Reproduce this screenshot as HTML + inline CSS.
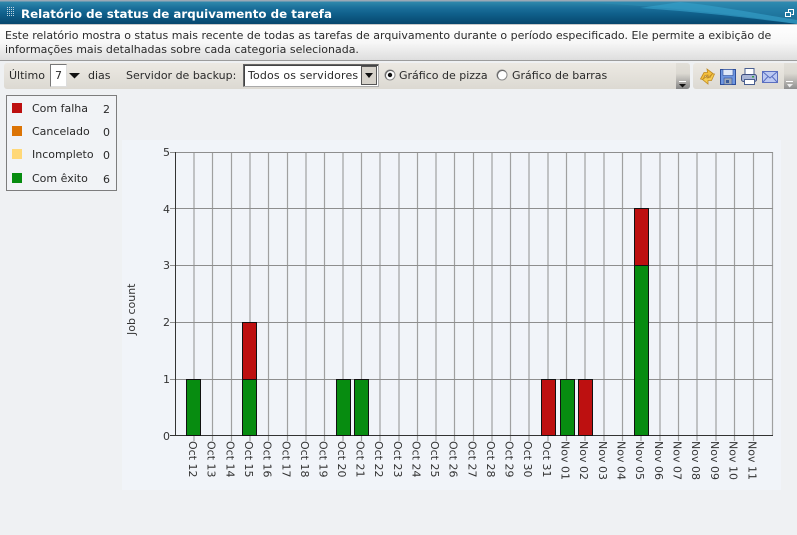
<!DOCTYPE html>
<html><head><meta charset="utf-8">
<style>
html,body{margin:0;padding:0;width:797px;height:535px;overflow:hidden;background:#eff1f3;font-family:"DejaVu Sans",Verdana,sans-serif;color:#2a2a2a}
.a{position:absolute;white-space:nowrap}
#title{left:0;top:0;width:797px;height:24px;background:linear-gradient(#9aa9b6 0,#9aa9b6 1px,#2f88ab 2px,#1a6f9a 8px,#0f5f8a 14px,#07476e 24px);overflow:hidden}
#desc{left:0;top:24px;width:797px;height:37px;background:linear-gradient(#fff 0,#f7f7f7 50%,#dedede 100%);border-top:1px solid #c9c9c9;border-bottom:1px solid #9c9c9c;box-sizing:border-box}
.t{font-size:11px;line-height:13px}
.tb{background:linear-gradient(#ece9e3,#dcd9d2);border-radius:3px}
</style></head><body>
<div id="title" class="a">
<svg class="a" style="left:0;top:0" width="797" height="24">
<path d="M560 2 C640 4 720 12 797 24 L797 2Z" fill="#2f8fb5" opacity=".5"/>
<path d="M680 2 C720 6 770 16 797 20 L797 24 C750 18 700 12 640 8Z" fill="#35a0ca" opacity=".65"/>
<g fill="#bcd3e0"><rect x="7" y="7" width="1" height="1"/><rect x="9" y="7" width="1" height="1"/><rect x="11" y="7" width="1" height="1"/><rect x="13" y="7" width="1" height="1"/><rect x="7" y="9" width="1" height="1"/><rect x="9" y="9" width="1" height="1"/><rect x="11" y="9" width="1" height="1"/><rect x="13" y="9" width="1" height="1"/><rect x="7" y="11" width="1" height="1"/><rect x="9" y="11" width="1" height="1"/><rect x="11" y="11" width="1" height="1"/><rect x="13" y="11" width="1" height="1"/><rect x="7" y="13" width="1" height="1"/><rect x="9" y="13" width="1" height="1"/><rect x="11" y="13" width="1" height="1"/><rect x="13" y="13" width="1" height="1"/><rect x="7" y="15" width="1" height="1"/><rect x="9" y="15" width="1" height="1"/><rect x="11" y="15" width="1" height="1"/><rect x="13" y="15" width="1" height="1"/></g>
<path d="M788.500 12.500V9.500h5v5h-2" fill="none" stroke="#fff"/><rect x="785.500" y="12.500" width="5" height="4" fill="none" stroke="#fff"/>
</svg>
<div class="a" style="left:21px;top:6px;font-size:11.85px;font-weight:bold;color:#fff;line-height:16px">Relatório de status de arquivamento de tarefa</div>
</div>
<div id="desc" class="a">
<div class="a t" style="left:5px;top:4px">Este relatório mostra o status mais recente de todas as tarefas de arquivamento durante o período especificado. Ele permite a exibição de</div>
<div class="a t" style="left:5px;top:18px">informações mais detalhadas sobre cada categoria selecionada.</div>
</div>

<div class="a tb" style="left:4px;top:63px;width:686px;height:26px"></div>
<div class="a" style="left:676px;top:63px;width:14px;height:26px;background:linear-gradient(#e2dfd8 0,#dcd9d2 40%,#858585 100%);border-radius:0 3px 3px 0"></div>
<svg class="a" style="left:679px;top:80px" width="8" height="8"><rect x="0" y="1" width="7" height="1" fill="#fff"/><path d="M0 4h7L3.500 7.500Z" fill="#111"/></svg>

<div class="a t" style="left:9px;top:69px">Último</div>
<div class="a" style="left:50px;top:64px;width:17px;height:23px;background:#fff;border:1px solid #777;border-right-color:#ddd;border-bottom-color:#ddd;box-sizing:border-box"></div>
<div class="a t" style="left:55px;top:69px">7</div>
<svg class="a" style="left:69px;top:72px" width="11" height="7"><path d="M0 1h11L5.500 6.500Z" fill="#111"/></svg>
<div class="a t" style="left:88px;top:69px">dias</div>
<div class="a t" style="left:126px;top:69px">Servidor de backup:</div>
<div class="a" style="left:243px;top:64px;width:136px;height:23px;background:#fff;border:1px solid #666;border-right-color:#aaa;border-bottom-color:#aaa;box-shadow:inset 1px 1px 0 #444;box-sizing:border-box"></div>
<div class="a t" style="left:248px;top:69px;letter-spacing:.14px">Todos os servidores</div>
<div class="a" style="left:361px;top:66px;width:16px;height:19px;background:#d6d2ca;border:1px solid #555;box-sizing:border-box"></div>
<svg class="a" style="left:365px;top:73px" width="9" height="6"><path d="M0 0h8L4 5Z" fill="#111"/></svg>

<svg class="a" style="left:383px;top:67px" width="16" height="16"><circle cx="7" cy="8" r="5" fill="#fff" stroke="#8a8a8a"/><path d="M3.500 11.500A5 5 0 0 1 10.500 4.500" fill="none" stroke="#666"/><circle cx="7" cy="8" r="2.200" fill="#111"/></svg>
<div class="a t" style="left:399px;top:69px">Gráfico de pizza</div>
<svg class="a" style="left:495px;top:67px" width="16" height="16"><circle cx="7" cy="8" r="5" fill="#fff" stroke="#8a8a8a"/><path d="M3.500 11.500A5 5 0 0 1 10.500 4.500" fill="none" stroke="#666"/></svg>
<div class="a t" style="left:512px;top:69px">Gráfico de barras</div>

<div class="a tb" style="left:693px;top:63px;width:104px;height:26px"></div>
<div class="a" style="left:784px;top:63px;width:13px;height:26px;background:linear-gradient(#e2dfd8 0,#dcd9d2 40%,#8f8f8f 100%)"></div>
<svg class="a" style="left:786px;top:80px" width="8" height="8"><rect x="0" y="1" width="7" height="1" fill="#fff"/><path d="M1 4h6L3.500 7.500Z" fill="#eee"/></svg>

<svg class="a" style="left:697px;top:66px" width="90" height="20">
<path d="M3.500 13 L7 6.500 L10.500 6.500 L10 3 L16 7.500 L11 11.500 L11 9 L8 9.500 L6 13.500Z" fill="#f4bf3c" stroke="#c08a20" stroke-width=".8"/>
<path d="M17.500 8 L14.500 14.500 L11 14.500 L11 18 L5.500 13.500 L10 10 L10 12 L13 11.500 L15 8Z" fill="#f6cc50" stroke="#c08a20" stroke-width=".8"/>
<rect x="23.500" y="3.500" width="15" height="15" fill="#6f97e0" stroke="#2f4f9a"/>
<rect x="26" y="3.500" width="10" height="6" fill="#dfe8f8" stroke="#2f4f9a" stroke-width=".6"/>
<rect x="27" y="12" width="8" height="6.500" fill="#9aa7b8" stroke="#2f4f9a" stroke-width=".6"/><rect x="29" y="14" width="3" height="3" fill="#3a5a9a"/>
<rect x="48" y="2.500" width="9" height="6" fill="#fff" stroke="#4a5f90"/>
<rect x="44.500" y="8.500" width="15" height="7" rx="2" fill="#aab6d6" stroke="#3f4f80"/>
<rect x="47.500" y="13.500" width="10" height="5" fill="#fff" stroke="#4a5f90"/>
<rect x="55" y="10" width="2" height="1.500" fill="#3aa04a"/>
<rect x="65.500" y="5.500" width="15" height="11" fill="#bcc9f2" stroke="#5a6fc0"/>
<path d="M65.500 5.500 L73 12 L80.500 5.500 M65.500 16.500 L71 10.500 M80.500 16.500 L75 10.500" fill="none" stroke="#5a6fc0"/>
</svg>

<div class="a" style="left:6px;top:95px;width:111px;height:96px;background:#f1f3f6;border:1px solid #7d7d7d;box-sizing:border-box"></div>
<svg class="a" style="left:12px;top:103px" width="11" height="82"><rect y="0" width="10" height="10" fill="#bd1010"/><rect y="23" width="10" height="10" fill="#dc7405"/><rect y="46" width="10" height="10" fill="#ffd878"/><rect y="70" width="10" height="10" fill="#078c10"/></svg>
<div class="a t" style="left:32px;top:102px">Com falha</div><div class="a t" style="left:103px;top:103px">2</div>
<div class="a t" style="left:32px;top:125px">Cancelado</div><div class="a t" style="left:103px;top:126px">0</div>
<div class="a t" style="left:32px;top:148px">Incompleto</div><div class="a t" style="left:103px;top:149px">0</div>
<div class="a t" style="left:32px;top:172px">Com êxito</div><div class="a t" style="left:103px;top:173px">6</div>

<svg class="a" style="left:0;top:0" width="797" height="535" font-family="DejaVu Sans, Verdana, sans-serif" font-size="11" fill="#333">
<rect x="122" y="140" width="659" height="350" fill="#f1f4f9"/>
<g stroke="#a0a0a0" stroke-width="1.2">
<path d="M194 152V441M212.500 152V441M231.500 152V441M250 152V441M268.500 152V441M287.500 152V441M306 152V441M324.500 152V441M343 152V441M361.500 152V441M380 152V441M399 152V441M417.500 152V441M436 152V441M454.500 152V441M473.500 152V441M492 152V441M510.500 152V441M529 152V441M548 152V441M566.500 152V441M585 152V441M604 152V441M622.500 152V441M641 152V441M660 152V441M678.500 152V441M697 152V441M716 152V441M734.500 152V441M753.500 152V441M772.500 152V435"/>
</g>
<g stroke="#8e8e8e"><path d="M170 152.500H773M170 208.500H773M170 265.500H773M170 322.500H773M170 379.500H773"/></g>
<path d="M175.500 152V435.500H773M170 435.500H176" fill="none" stroke="#333"/>
<g stroke="#111" stroke-width="1">
<rect x="186.500" y="379.500" width="14" height="56" fill="#078c10"/>
<rect x="242.500" y="379.500" width="14" height="56" fill="#078c10"/>
<rect x="242.500" y="322.500" width="14" height="57" fill="#bd1010"/>
<rect x="336.500" y="379.500" width="14" height="56" fill="#078c10"/>
<rect x="354.500" y="379.500" width="14" height="56" fill="#078c10"/>
<rect x="541.500" y="379.500" width="14" height="56" fill="#bd1010"/>
<rect x="560.500" y="379.500" width="14" height="56" fill="#078c10"/>
<rect x="578.500" y="379.500" width="14" height="56" fill="#bd1010"/>
<rect x="634.500" y="265.500" width="14" height="170" fill="#078c10"/>
<rect x="634.500" y="208.500" width="14" height="57" fill="#bd1010"/>
</g>
<g text-anchor="end"><text x="170" y="156">5</text><text x="170" y="213">4</text><text x="170" y="269">3</text><text x="170" y="326">2</text><text x="170" y="383">1</text><text x="170" y="440">0</text></g>
<text transform="translate(135,335) rotate(-90)">Job count</text>
<g>
<text transform="translate(189,441) rotate(90)">Oct 12</text>
<text transform="translate(207.500,441) rotate(90)">Oct 13</text>
<text transform="translate(226.500,441) rotate(90)">Oct 14</text>
<text transform="translate(245,441) rotate(90)">Oct 15</text>
<text transform="translate(263.500,441) rotate(90)">Oct 16</text>
<text transform="translate(282.500,441) rotate(90)">Oct 17</text>
<text transform="translate(301,441) rotate(90)">Oct 18</text>
<text transform="translate(319.500,441) rotate(90)">Oct 19</text>
<text transform="translate(338,441) rotate(90)">Oct 20</text>
<text transform="translate(356.500,441) rotate(90)">Oct 21</text>
<text transform="translate(375,441) rotate(90)">Oct 22</text>
<text transform="translate(394,441) rotate(90)">Oct 23</text>
<text transform="translate(412.500,441) rotate(90)">Oct 24</text>
<text transform="translate(431,441) rotate(90)">Oct 25</text>
<text transform="translate(449.500,441) rotate(90)">Oct 26</text>
<text transform="translate(468.500,441) rotate(90)">Oct 27</text>
<text transform="translate(487,441) rotate(90)">Oct 28</text>
<text transform="translate(505.500,441) rotate(90)">Oct 29</text>
<text transform="translate(524,441) rotate(90)">Oct 30</text>
<text transform="translate(543,441) rotate(90)">Oct 31</text>
<text transform="translate(561.500,441) rotate(90)">Nov 01</text>
<text transform="translate(580,441) rotate(90)">Nov 02</text>
<text transform="translate(599,441) rotate(90)">Nov 03</text>
<text transform="translate(617.500,441) rotate(90)">Nov 04</text>
<text transform="translate(636,441) rotate(90)">Nov 05</text>
<text transform="translate(655,441) rotate(90)">Nov 06</text>
<text transform="translate(673.500,441) rotate(90)">Nov 07</text>
<text transform="translate(692,441) rotate(90)">Nov 08</text>
<text transform="translate(711,441) rotate(90)">Nov 09</text>
<text transform="translate(729.500,441) rotate(90)">Nov 10</text>
<text transform="translate(748.500,441) rotate(90)">Nov 11</text>
</g>
</svg>
</body></html>
